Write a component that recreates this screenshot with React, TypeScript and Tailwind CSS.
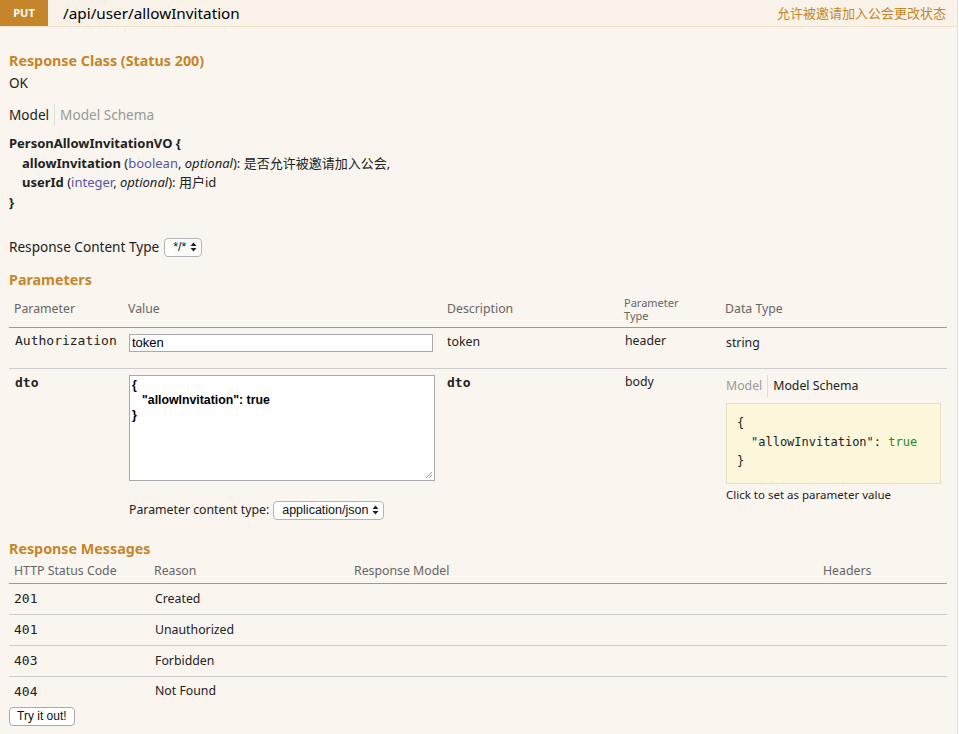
import React from "react";

const sans = "font-['Noto_Sans','Noto_Sans_CJK_SC',sans-serif]";
const mono = "font-['DejaVu_Sans_Mono',monospace]";
const helv = "font-['Liberation_Sans','Noto_Sans_CJK_SC',sans-serif]";

const UpDown = () => (
  <svg width="7" height="10" viewBox="0 0 7 10" className="ml-1">
    <path d="M3.5 0.5 L6.5 4 L0.5 4 Z" fill="#222" />
    <path d="M3.5 9.5 L6.5 6 L0.5 6 Z" fill="#222" />
  </svg>
);

const FakeSelect = ({ label, className = "" }: { label: string; className?: string }) => (
  <span
    className={`inline-flex items-center h-[19px] rounded-[4px] border border-[#b5b5b5] bg-[#fdfdfd] pl-[8px] pr-[4px] text-[12.5px] text-[#111] ${helv} ${className}`}
  >
    {label}
    <UpDown />
  </span>
);

const ModelTabs = ({ active, size }: { active: "model" | "schema"; size: string }) => (
  <div className={`flex items-center ${size}`}>
    <span className={active === "model" ? "text-[#222]" : "text-[#999]"}>Model</span>
    <span className="mx-[5px] w-px h-[22px] bg-[#ddd]" />
    <span className={active === "schema" ? "text-[#222]" : "text-[#999]"}>Model Schema</span>
  </div>
);

const messages = [
  { code: "201", reason: "Created" },
  { code: "401", reason: "Unauthorized" },
  { code: "403", reason: "Forbidden" },
  { code: "404", reason: "Not Found" },
];

export default function App() {
  return (
    <div className={`w-[959px] min-h-[734px] bg-white ${sans} text-[#222]`}>
      <div className="w-[958px] border-r border-[#f0e0ca] bg-[#faf5ee]">
        {/* heading */}
        <div className="flex items-start h-[27px] bg-[#f9f2e9] border-b border-[#f0e0ca]">
          <span className="flex items-center justify-center w-[48px] h-[26px] bg-[#c5862b] text-white text-[11px] font-bold">
            PUT
          </span>
          <span className="ml-[15px] leading-[26px] text-[15.3px] text-black">/api/user/allowInvitation</span>
          <span className="ml-auto mr-[11px] leading-[26px] text-[13px] text-[#c5862b]">允许被邀请加入公会更改状态</span>
        </div>

        <div className="pl-[9px] pr-[10px] pb-[9px]">
          <h4 className="mt-[24px] text-[14.3px] leading-[20px] font-bold text-[#c5862b]">Response Class (Status 200)</h4>
          <div className="mt-[2px] text-[13.6px] leading-[19px]">OK</div>

          <ModelTabs active="model" size="mt-[12px] h-[22px] text-[13.6px]" />

          <div className="mt-[8px] text-[13px] leading-[19.5px] text-[#222]">
            <div className="font-bold">PersonAllowInvitationVO {"{"}</div>
            <div className="pl-[13px]">
              <span className="font-bold">allowInvitation</span> (<span className="text-[#55a]">boolean</span>,{" "}
              <span className="italic">optional</span>): 是否允许被邀请加入公会,
            </div>
            <div className="pl-[13px]">
              <span className="font-bold">userId</span> (<span className="text-[#55a]">integer</span>,{" "}
              <span className="italic">optional</span>): 用户id
            </div>
            <div className="font-bold">{"}"}</div>
          </div>

          <div className="mt-[25px] flex items-center h-[20px] text-[13.6px]">
            <span>Response Content Type</span>
            <FakeSelect label="*/*" className="ml-[5px]" />
          </div>

          <h4 className="mt-[13px] text-[14.3px] leading-[20px] font-bold text-[#c5862b]">Parameters</h4>

          {/* parameters table */}
          <div className="mt-[2px] w-[938px] text-[12.3px]">
            <div className="grid grid-cols-[114px_319px_177px_101px_1fr] h-[36px] items-center border-b border-[#999] text-[#666]">
              <div className="pl-[5px]">Parameter</div>
              <div className="pl-[5px]">Value</div>
              <div className="pl-[5px]">Description</div>
              <div className="pl-[5px] text-[11px] leading-[12.5px]">
                <div>Parameter</div>
                <div>Type</div>
              </div>
              <div className="pl-[5px]">Data Type</div>
            </div>

            <div className="grid grid-cols-[114px_319px_177px_101px_1fr] h-[41px] border-b border-[#ccc] text-[#222]">
              <div className={`pl-[6px] pt-[5px] leading-[16px] ${mono} text-[13px]`}>Authorization</div>
              <div className="pl-[6px] pt-[6px]">
                <div className={`w-[304px] h-[18px] border border-[#aaa] bg-white pl-[2px] leading-[16px] text-[13px] text-black ${helv}`}>
                  token
                </div>
              </div>
              <div className="pl-[5px] pt-[6px] leading-[16px]">token</div>
              <div className="pl-[6px] pt-[5px] leading-[16px]">header</div>
              <div className="pl-[6px] pt-[7px] leading-[16px]">string</div>
            </div>

            <div className="grid grid-cols-[114px_319px_177px_101px_1fr] h-[157px] text-[#222]">
              <div className={`pl-[6px] pt-[6px] leading-[16px] ${mono} text-[13px] font-bold`}>dto</div>
              <div className="pl-[6px] pt-[6px]">
                <div className={`relative w-[306px] h-[106px] border border-[#aaa] bg-white px-[2px] pt-[2px] text-[12.3px] leading-[15px] font-bold text-black ${helv}`}>
                  <div>{"{"}</div>
                  <div className="pl-[10px]">"allowInvitation": true</div>
                  <div>{"}"}</div>
                  <svg width="8" height="8" viewBox="0 0 8 8" className="absolute right-[1px] bottom-[1px]">
                    <path d="M7 1 L1 7 M7 4 L4 7" stroke="#888" strokeWidth="0.8" />
                  </svg>
                </div>
                <div className="mt-[19px] flex items-center h-[20px] text-[12.3px]">
                  <span>Parameter content type:</span>
                  <FakeSelect label="application/json" className="ml-[4px]" />
                </div>
              </div>
              <div className={`pl-[5px] pt-[6px] leading-[16px] ${mono} text-[13px] font-bold`}>dto</div>
              <div className="pl-[6px] pt-[5px] leading-[16px]">body</div>
              <div className="pl-[6px] pt-[6px]">
                <ModelTabs active="schema" size="h-[22px] text-[12.3px]" />
                <div className={`mt-[6px] w-[215px] h-[81px] border border-[#e5e0c6] bg-[#fcf6db] pl-[10px] pt-[10px] text-[12px] leading-[19px] ${mono} text-[#222]`}>
                  <div>{"{"}</div>
                  <div className="pl-[14px]">
                    "allowInvitation": <span className="text-[#2a8a2a]">true</span>
                  </div>
                  <div>{"}"}</div>
                </div>
                <div className="mt-[2px] text-[11.5px] leading-[17px]">Click to set as parameter value</div>
              </div>
            </div>
          </div>

          <h4 className="mt-[13px] text-[14.3px] leading-[20px] font-bold text-[#c5862b]">Response Messages</h4>

          <div className="w-[938px] text-[12.3px]">
            <div className="grid grid-cols-[140px_200px_469px_1fr] h-[25px] items-center border-b border-[#999] text-[#666]">
              <div className="pl-[5px]">HTTP Status Code</div>
              <div className="pl-[5px]">Reason</div>
              <div className="pl-[5px]">Response Model</div>
              <div className="pl-[5px]">Headers</div>
            </div>
            {messages.map((m, i) => {
              const last = i === messages.length - 1;
              return (
                <div
                  key={m.code}
                  className={`grid grid-cols-[140px_200px_469px_1fr] items-center text-[#222] ${
                    last ? "h-[29px]" : "h-[31px] border-b border-[#ccc]"
                  }`}
                >
                  <div className={`pl-[5px] ${mono} text-[13px]`}>{m.code}</div>
                  <div className="pl-[6px]">{m.reason}</div>
                  <div />
                  <div />
                </div>
              );
            })}
          </div>

          <button
            className={`block mt-[1px] h-[19px] px-[7px] rounded-[4px] border border-[#aaa] bg-white text-[12px] leading-[17px] text-[#111] ${helv}`}
          >
            Try it out!
          </button>
        </div>
      </div>
    </div>
  );
}
